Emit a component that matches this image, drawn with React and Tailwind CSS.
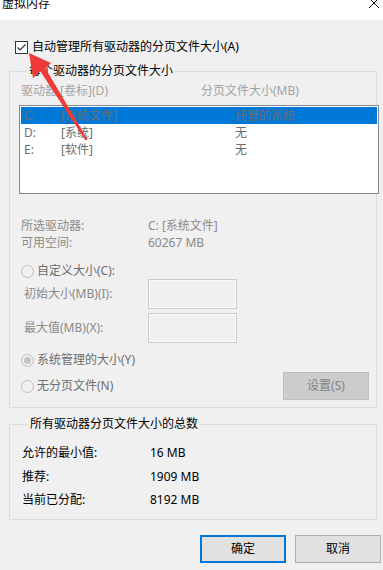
import React from 'react';

const font = { fontFamily: "'Noto Sans', 'Noto Sans CJK SC', sans-serif" };

const Radio = ({ checked }) => (
  <svg width="13" height="13" viewBox="0 0 13 13" className="shrink-0">
    <circle cx="6.5" cy="6.5" r="6" fill="#f0f0f0" stroke="#bcbcbc" strokeWidth="1" />
    {checked && <circle cx="6.5" cy="6.5" r="3.5" fill="#c4c4c4" />}
  </svg>
);

const RadioRow = ({ checked, label, className = '' }) => (
  <div className={`flex items-center h-[16px] ${className}`}>
    <Radio checked={checked} />
    <span className="ml-[3px] text-[#6d6d6d]">{label}</span>
  </div>
);

const Group = ({ title, className = '', children }) => (
  <fieldset className={`ml-[9px] w-[368px] min-w-0 border border-[#dcdcdc] ${className}`}>
    <legend className="ml-[6px] px-[2px] leading-[16px] text-black">{title}</legend>
    {children}
  </fieldset>
);

const drives = [
  { letter: 'C:', label: '[系统文件]', size: '托管的系统', selected: true },
  { letter: 'D:', label: '[系统]', size: '无' },
  { letter: 'E:', label: '[软件]', size: '无' },
];

export default function App() {
  return (
    <div className="relative w-[383px] h-[570px] overflow-hidden bg-[#f0f0f0] text-[12px] leading-[16px]" style={font}>
      {/* title bar */}
      <div className="h-[20px] bg-white flex justify-between">
        <span className="ml-[2px] -mt-[4px] text-black">虚拟内存</span>
        <svg width="12" height="12" viewBox="0 0 12 12" className="mr-[3px] -mt-[3px]">
          <path d="M1 1 L11 11 M11 1 L1 11" stroke="#111" strokeWidth="1" />
        </svg>
      </div>

      {/* auto manage checkbox */}
      <div className="mt-[19px] ml-[15px] flex items-center h-[16px]">
        <div className="w-[13px] h-[13px] border border-[#333] bg-white flex items-center justify-center">
          <svg width="11" height="11" viewBox="0 0 11 11">
            <path d="M1.5 5.5 L4 8 L9.5 2.5" fill="none" stroke="#333" strokeWidth="1.2" />
          </svg>
        </div>
        <span className="ml-[4px] text-black">自动管理所有驱动器的分页文件大小(A)</span>
      </div>

      {/* per-drive group */}
      <Group title="每个驱动器的分页文件大小" className="mt-[8px] pl-[11px] pr-[7px] pb-[7px]">
        <div className="mt-[4px] flex h-[16px] text-[#a3a3a3]">
          <span className="w-[180px]">驱动器 [卷标](D)</span>
          <span>分页文件大小(MB)</span>
        </div>
        <div className="mt-[6px] -ml-[2px] w-[360px] h-[89px] border border-[#828790] bg-white p-px">
          {drives.map(d => (
            <div
              key={d.letter}
              className={`flex h-[17px] items-center pl-[3px] text-[#6d6d6d] ${d.selected ? 'bg-[#0078d7]' : ''}`}
            >
              <span className="w-[37px]">{d.letter}</span>
              <span className="w-[174px]">{d.label}</span>
              <span>{d.size}</span>
            </div>
          ))}
        </div>

        <div className="mt-[24px] flex h-[16px] text-[#8a8a8a]">
          <span className="w-[127px]">所选驱动器:</span>
          <span>C:  [系统文件]</span>
        </div>
        <div className="mt-px flex h-[16px] text-[#8a8a8a]">
          <span className="w-[127px]">可用空间:</span>
          <span>60267 MB</span>
        </div>

        <RadioRow label="自定义大小(C):" className="mt-[12px]" />
        <div className="flex items-center h-[30px]">
          <span className="w-[127px] pl-[3px] text-[#8a8a8a]">初始大小(MB)(I):</span>
          <div className="w-[89px] h-[30px] border border-[#cccccc] shadow-[inset_0_0_0_1px_#fafafa]" />
        </div>
        <div className="mt-[4px] flex items-center h-[30px]">
          <span className="w-[127px] pl-[3px] text-[#8a8a8a]">最大值(MB)(X):</span>
          <div className="w-[89px] h-[30px] border border-[#cccccc] shadow-[inset_0_0_0_1px_#fafafa]" />
        </div>

        <RadioRow checked label="系统管理的大小(Y)" className="mt-[9px]" />
        <div className="mt-[4px] flex items-center justify-between">
          <RadioRow label="无分页文件(N)" />
          <div className="w-[86px] h-[28px] bg-[#cccccc] border border-[#bfbfbf] flex items-center justify-center text-[#838383]">
            设置(S)
          </div>
        </div>
      </Group>

      {/* totals group */}
      <Group title="所有驱动器分页文件大小的总数" className="mt-[8px] pl-[12px] pb-[11px]">
        <div className="mt-[13px] flex h-[16px] text-black">
          <span className="w-[128px]">允许的最小值:</span>
          <span>16 MB</span>
        </div>
        <div className="mt-[8px] flex h-[16px] text-black">
          <span className="w-[128px]">推荐:</span>
          <span>1909 MB</span>
        </div>
        <div className="mt-[7px] flex h-[16px] text-black">
          <span className="w-[128px]">当前已分配:</span>
          <span>8192 MB</span>
        </div>
      </Group>

      {/* dialog buttons */}
      <div className="mt-[15px] pr-[2px] flex justify-end gap-[9px]">
        <div className="w-[86px] h-[28px] bg-[#e1e1e1] border-2 border-[#0078d7] flex items-center justify-center text-black">
          确定
        </div>
        <div className="w-[86px] h-[28px] bg-[#e1e1e1] border border-[#adadad] flex items-center justify-center text-black">
          取消
        </div>
      </div>

      {/* red annotation arrow */}
      <svg className="absolute left-0 top-0 pointer-events-none" width="383" height="570">
        <polygon
          points="29,53 51,63 45.5,68.4 87.5,139.5 85.5,140.5 40.5,71.6 33,78"
          fill="#ef3a3a"
        />
      </svg>
    </div>
  );
}
